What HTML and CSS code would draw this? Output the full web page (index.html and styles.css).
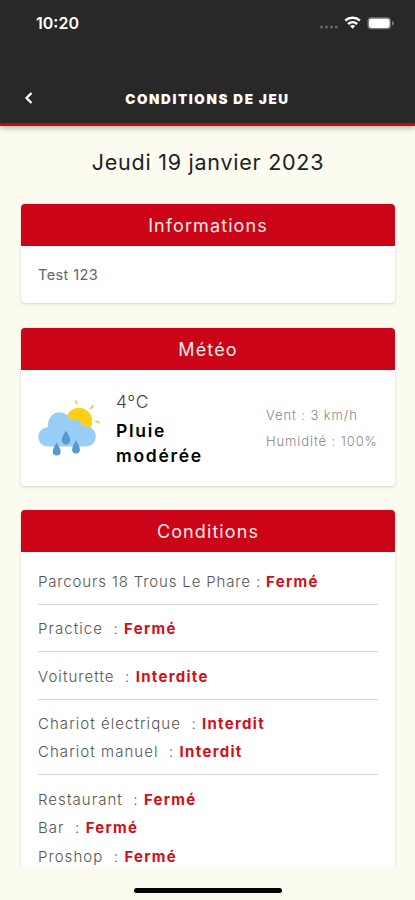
FILE: index.html
```html
<!DOCTYPE html>
<html lang="fr">
<head>
<meta charset="utf-8">
<title>Conditions de jeu</title>
<link rel="stylesheet" href="styles.css">
</head>
<body>
<header class="top">
  <div class="status">
    <span class="time">10:20</span>
    <svg class="signals" width="76" height="16" viewBox="0 0 76 16">
      <g fill="#666"><circle cx="2.500" cy="12" r="1.500"/><circle cx="7.500" cy="12" r="1.500"/><circle cx="12.500" cy="12" r="1.500"/><circle cx="17.300" cy="12" r="1.500"/></g>
      <g fill="none" stroke="#fff" stroke-width="2.600"><path d="M26.300 5.500a11 11 0 0 1 14.600 0"/><path d="M29.100 8.900a7 7 0 0 1 9 0"/></g>
      <path d="M31 11.100a4.200 4.200 0 0 1 5.200 0l-2.600 2.700z" fill="#fff"/>
      <rect x="48.500" y="2.300" width="23.500" height="12" rx="3.800" fill="#777"/>
      <rect x="50" y="3.700" width="20.500" height="9.200" rx="2.300" fill="#fff"/>
      <path d="M73 6q2 .5 2 2.300t-2 2.300z" fill="#777"/>
    </svg>
  </div>
  <div class="nav">
    <svg class="back" width="10" height="14" viewBox="0 0 10 14"><path d="M7.500 2 2.500 7l5 5" fill="none" stroke="#fff" stroke-width="2.300"/></svg>
    <h1 class="title">CONDITIONS DE JEU</h1>
  </div>
</header>
<main class="content">
  <h2 class="date">Jeudi 19 janvier 2023</h2>
  <section class="card">
    <h3 class="card-title">Informations</h3>
    <p class="info">Test 123</p>
  </section>
  <section class="card meteo">
    <h3 class="card-title">Météo</h3>
    <div class="weather">
      <svg class="icon" width="64" height="64" viewBox="0 0 64 64">
        <g stroke="#f6c65e" stroke-width="1.800" stroke-linecap="round"><path d="m38.500 7.500-.6-2.500M52.500 12.500l2.500-2.500M58 25.500l2.500.5"/></g>
        <circle cx="41" cy="25" r="13.200" fill="#ffce17"/>
        <path d="M10.500 50.500C4 50.500.4 46 .4 41c0-5.500 4-9.500 9.400-9.800C9.500 23 14 16.300 21.500 16.300c5 0 9 3 10.500 7.200 5.500-2 12 1.500 13 7 7-1 12.800 3.500 12.800 10 0 5.800-4.300 10-10.800 10z" fill="#98cdf6"/>
        <g fill="#5798cd"><path d="M28 34.500c1.800 3.500 4.200 6.500 4.200 9.700a4.200 4.200 0 0 1-8.400 0c0-3.200 2.400-6.200 4.200-9.700z"/><path d="M18.700 46.500c1.600 3.200 3.900 6 3.900 9a3.900 3.900 0 0 1-7.800 0c0-3 2.300-5.800 3.900-9z"/><path d="M38 44.500c1.600 3.200 3.900 6 3.900 9a3.900 3.900 0 0 1-7.800 0c0-3 2.300-5.800 3.900-9z"/></g>
      </svg>
      <div class="summary">
        <div class="temp">4°C</div>
        <div class="desc">Pluie<br>modérée</div>
      </div>
      <div class="details"><div>Vent : 3 km/h</div><div>Humidité : 100%</div></div>
    </div>
  </section>
  <section class="card conditions">
    <h3 class="card-title">Conditions</h3>
    <div class="groups">
      <div class="group"><p class="row course">Parcours 18 Trous Le Phare : <b>Fermé</b></p></div>
      <div class="group"><p class="row">Practice&nbsp; : <b>Fermé</b></p></div>
      <div class="group"><p class="row">Voiturette&nbsp; : <b>Interdite</b></p></div>
      <div class="group"><p class="row">Chariot électrique&nbsp; : <b>Interdit</b></p><p class="row">Chariot manuel&nbsp; : <b>Interdit</b></p></div>
      <div class="group"><p class="row">Restaurant&nbsp; : <b>Fermé</b></p><p class="row">Bar&nbsp; : <b>Fermé</b></p><p class="row">Proshop&nbsp; : <b>Fermé</b></p></div>
    </div>
  </section>
</main>
<footer class="home"><div class="home-bar"></div></footer>
</body>
</html>
```
FILE: styles.css
```css
* { box-sizing: border-box; margin: 0; padding: 0; }
body {
  width: 415px; height: 900px; overflow: hidden;
  display: flex; flex-direction: column;
  background: #fbfbf0; color: #555;
  font-family: Inter, "Liberation Sans", sans-serif;
}
.top {
  flex: none; height: 126px; background: #282828;
  border-bottom: 3px solid #c4090f;
  box-shadow: 0 2px 6px rgba(0,0,0,.3); z-index: 1;
}
.status { height: 46px; padding: 0 20px 0 36px; display: flex; align-items: center; justify-content: space-between; }
.time { color: #fff; font-size: 16px; font-weight: 600; letter-spacing: 0; }
.signals { display: block; }
.nav { height: 77px; padding: 28px 24px 0; display: grid; grid-template-columns: 10px 1fr 10px; align-items: start; }
.back { margin-top: 17px; }
.title { margin-top: 14px; text-align: center; white-space: nowrap; font-size: 13.5px; line-height: 22px; font-weight: 900; letter-spacing: 1.6px; color: #fff; }
.content { flex: none; height: 740.500px; overflow: hidden; padding: 18px 20px 0 21px; }
.date { text-align: center; font-size: 21.5px; line-height: 36px; font-weight: 400; color: #222; letter-spacing: .75px; margin-bottom: 24px; }
.card { background: #fff; border-radius: 4px; box-shadow: 0 1px 3px rgba(0,0,0,.16); margin-bottom: 25px; overflow: hidden; }
.card.meteo { margin-bottom: 24px; }
.card-title { height: 42px; background: #cb0418; color: #ffe9e5; text-align: center; font-size: 18px; line-height: 43px; font-weight: 400; letter-spacing: 1.100px; }
.info { height: 57px; padding-left: 17px; line-height: 58px; font-size: 14.5px; letter-spacing: .4px; color: #666; }
.weather { height: 116px; padding: 0 17px; display: flex; align-items: center; }
.icon { flex: none; }
.summary { margin-left: 14px; width: 120px; color: #000; }
.temp { font-size: 17.500px; line-height: 26px; font-weight: 300; color: #444; letter-spacing: .7px; }
.desc { font-size: 17.500px; line-height: 25px; padding-top: 3px; font-weight: 600; letter-spacing: 1.700px; }
.details { margin-left: auto; width: 112px; white-space: nowrap; font-size: 13px; line-height: 25.500px; padding-top: 1px; font-weight: 300; letter-spacing: .9px; color: #888; }
.conditions { margin-bottom: 0; }
.groups { padding: 16px 17px 0; }
.group { border-bottom: 1px solid #d5d5d5; padding-bottom: 7.500px; margin-bottom: 10.300px; }
.group:last-child { border-bottom: 0; }
.row { line-height: 28.500px; font-size: 15px; font-weight: 350; letter-spacing: 1.050px; white-space: nowrap; }
.row.course { letter-spacing: .85px; }
.row b { color: #d60d16; font-weight: 700; letter-spacing: 1.300px; }
.home { flex: 1; display: flex; justify-content: center; padding-top: 21px; }
.home-bar { width: 148px; height: 5px; border-radius: 3px; background: #050505; }
```
